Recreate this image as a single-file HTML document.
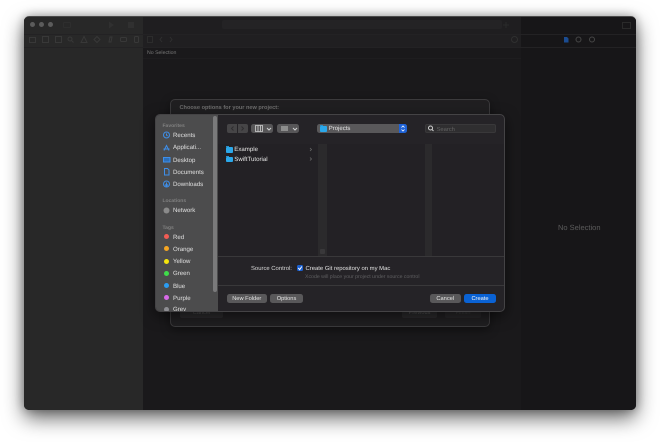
<!DOCTYPE html>
<html><head><meta charset="utf-8">
<style>
html,body{margin:0;padding:0;background:#fff;width:660px;height:442px;overflow:hidden}
*{box-sizing:border-box}
body{font-family:"Liberation Sans",sans-serif;position:relative;text-rendering:geometricPrecision}
#w{position:absolute;left:0;top:0;width:660px;height:442px;filter:blur(.35px)}
.a{position:absolute}
.t{position:absolute;white-space:nowrap;line-height:10px;font-size:6.1px;color:#e2e2e2;margin-top:1px}
.side{left:173px;color:#e0e0e0}
.hd{left:162.500px;color:#808080;font-size:5px;font-weight:bold}
.dot{position:absolute;left:164.300px;width:5px;height:5px;border-radius:50%}
.btn{position:absolute;height:9px;border-radius:2.500px;background:#59585a;color:#e4e4e4;font-size:5.700px;line-height:10px;text-align:center}
.folder{position:absolute;left:226px;width:6.500px;height:5.500px;background:#2ba8ea;border-radius:1px}
.folder:before{content:"";position:absolute;left:0;top:-1px;width:3px;height:1px;background:#2a8fc8}
.ic{position:absolute;border:1px solid #2e2e2e}
svg{position:absolute;left:0;top:0}
</style></head>
<body>
<div id="w">
<!-- window -->
<div class="a" style="left:24px;top:16px;width:612px;height:394px;border-radius:5px;background:#1a191b;box-shadow:0 8px 20px rgba(0,0,0,.6),0 0 10px rgba(0,0,0,.3);overflow:hidden;border-top:1px solid #4a4a4a">
  <div class="a" style="left:0;top:0;width:119px;height:394px;background:#282828"></div>
  <div class="a" style="left:119px;top:0;width:378px;height:18px;background:#1f1e20"></div>
  <div class="a" style="left:119px;top:18px;width:378px;height:13px;background:#201f21"></div>
  <div class="a" style="left:497px;top:0;width:115px;height:394px;background:#171618;"></div>
  <div class="a" style="left:0;top:17px;width:612px;height:1px;background:#232224"></div>
  <div class="a" style="left:0;top:30px;width:612px;height:1px;background:#232224"></div>
  <div class="a" style="left:119px;top:41px;width:378px;height:1px;background:#1e1d1f"></div>
</div>
<div class="a" style="left:30px;top:22px;width:5px;height:5px;border-radius:50%;background:#5c5c5c"></div>
<div class="a" style="left:39px;top:22px;width:5px;height:5px;border-radius:50%;background:#5c5c5c"></div>
<div class="a" style="left:48px;top:22px;width:5px;height:5px;border-radius:50%;background:#5c5c5c"></div>
<div class="ic" style="left:63px;top:22px;width:8px;height:6px;border-radius:1px"></div>
<svg width="660" height="442" fill="none">
  <path d="M109 21.500l5 3.500-5 3.500z" fill="#303030"/>
  <rect x="128" y="22" width="6" height="6" fill="#303030"/>
  <g stroke="#383838" stroke-width="1">
    <rect x="29.500" y="37.500" width="6" height="5"/>
    <rect x="42.500" y="36.500" width="6" height="6"/>
    <rect x="55.500" y="36.500" width="6" height="6"/>
    <circle cx="70" cy="39" r="2"/><path d="M71.500 40.500l2 2"/>
    <path d="M84 36.500l3 6h-6z"/>
    <path d="M97 36.500l3 3-3 3-3-3z"/>
    <path d="M109 42l1-5 2 0-1 5z"/>
    <rect x="120.500" y="37.500" width="6" height="4" rx="1"/>
    <rect x="134.500" y="36.500" width="4" height="6" rx="1"/>
    <rect x="147.500" y="36.500" width="5" height="6" stroke="#2c2c2c"/>
    <path d="M162 37l-2 2.500 2 2.500M170 37l2 2.500-2 2.500" stroke="#2f2f2f"/>
    <circle cx="514.500" cy="39.500" r="3" stroke="#303030"/>
    <path d="M503 25h6M506 22v6" stroke="#2a2a2a"/>
    <rect x="622.500" y="22.500" width="8" height="6" stroke="#2a2a2a"/>
    <circle cx="578.500" cy="39.500" r="2.500" stroke="#464646"/>
    <circle cx="592" cy="39.500" r="2.500" stroke="#464646"/>
  </g>
  <path d="M564 37h3l1.500 1.500V42.500H564z" fill="#1b4c91"/>
</svg>
<div class="a" style="left:222px;top:20px;width:280px;height:9px;background:#242325;border-radius:2px"></div>
<div class="t" style="left:147px;top:46.500px;font-size:5.200px;color:#777">No Selection</div>
<div class="t" style="left:558px;top:222px;font-size:7.500px;color:#5c5c5c">No Selection</div>

<!-- back sheet -->
<div class="a" style="left:170px;top:99px;width:320px;height:228px;background:#201f21;border:1px solid #3b3a3c;border-radius:5px;box-shadow:0 3px 10px rgba(0,0,0,.4)"></div>
<div class="t" style="left:179.500px;top:102px;font-size:5.600px;font-weight:bold;color:#6f6f6f">Choose options for your new project:</div>
<div class="a" style="left:180px;top:309px;width:43px;height:9px;background:#2b2a2c;border-radius:2px;color:#555;font-size:5.600px;line-height:9px;text-align:center">Cancel</div>
<div class="a" style="left:402px;top:309px;width:35px;height:9px;background:#2b2a2c;border-radius:2px;color:#5a5a5a;font-size:5.600px;line-height:9px;text-align:center">Previous</div>
<div class="a" style="left:445px;top:309px;width:36px;height:9px;background:#272628;border-radius:2px;color:#3f3f3f;font-size:5.600px;line-height:9px;text-align:center">Finish</div>

<!-- front sheet -->
<div class="a" style="left:155px;top:114px;width:350px;height:198px;background:#252327;border:1px solid #444345;border-radius:5px;box-shadow:0 4px 14px rgba(0,0,0,.55);overflow:hidden">
  <div class="a" style="left:-1px;top:-1px;width:63px;height:198px;background:#4c4c4d"></div>
  <div class="a" style="left:57px;top:1px;width:4px;height:176px;background:#7a7a7b;border-radius:2px"></div>
  <div class="a" style="left:62px;top:0;width:288px;height:31px;border-bottom:1px solid #2f2e30"></div>
  <div class="a" style="left:62px;top:29px;width:288px;height:112px;background:#232125"></div>
  <div class="a" style="left:162px;top:29px;width:9px;height:112px;background:#2b2a2c"></div>
  <div class="a" style="left:269px;top:29px;width:7px;height:112px;background:#2b2a2c"></div>
  <div class="a" style="left:163.500px;top:134px;width:5px;height:5px;background:#39383a;border-radius:1px"></div>
  <div class="a" style="left:62px;top:141px;width:288px;height:1px;background:#39383a"></div>
  <div class="a" style="left:62px;top:170px;width:288px;height:1px;background:#39383a"></div>
</div>

<!-- toolbar -->
<div class="a" style="left:227px;top:124px;width:10px;height:9px;background:#464547;border-radius:2px 0 0 2px"></div>
<div class="a" style="left:238px;top:124px;width:10px;height:9px;background:#464547;border-radius:0 2px 2px 0"></div>
<div class="a" style="left:251px;top:124px;width:22px;height:9px;background:#575658;border-radius:2.500px"></div>
<div class="a" style="left:277px;top:124px;width:22px;height:9px;background:#575658;border-radius:2.500px"></div>
<div class="a" style="left:281px;top:126px;width:7px;height:5px;background:#8d8d8d"></div>
<div class="a" style="left:317px;top:124px;width:90px;height:9px;background:#59585a;border-radius:2.500px"></div>
<div class="a" style="left:399px;top:124px;width:8px;height:9px;background:#1e62d6;border-radius:0 2.500px 2.500px 0"></div>
<div class="folder" style="left:320px;top:126px"></div>
<div class="t" style="left:328.700px;top:123px;font-size:6px;color:#e4e4e4">Projects</div>
<div class="a" style="left:425px;top:124px;width:71px;height:9px;background:#2f2e30;border:1px solid #39383a;border-radius:2px"></div>
<div class="t" style="left:436.500px;top:123.500px;font-size:5.800px;color:#626262">Search</div>
<svg width="660" height="442" fill="none">
  <path d="M233.500 126.500l-2 2 2 2M241.500 126.500l2 2-2 2" stroke="#2f2e30"/>
  <path d="M255.500 125.500h7v6h-7zM258 125.500v6M260.500 125.500v6" stroke="#d0d0d0" stroke-width=".8"/>
  <path d="M267 128l2 2 2-2M293 128l2 2 2-2" stroke="#d0d0d0"/>
  <path d="M401.500 127.500l1.500-1.500 1.500 1.500M401.500 129.500l1.500 1.500 1.500-1.500" stroke="#fff" stroke-width=".8"/>
  <circle cx="430.500" cy="128" r="2" stroke="#d0d0d0"/><path d="M432 129.500l1.500 1.500" stroke="#d0d0d0"/>
  <path d="M310 148l1.500 1.500L310 151M310 157.500l1.500 1.500-1.500 1.500" stroke="#666" stroke-width=".8"/>

  <!-- sidebar icons -->
  <g stroke="#3e8fea" stroke-width="1">
    <circle cx="166.500" cy="135" r="3"/><path d="M166.500 133.500V135l1 1"/>
    <path d="M164 150.500l2.500-5 2.500 5M163.500 149h6"/>
    <rect x="163.500" y="157.500" width="6.500" height="4.500" fill="#2d6fb8"/>
    <path d="M164.500 168.500h3l1.500 1.500v5h-4.500z"/>
    <circle cx="166.500" cy="184" r="3"/><path d="M166.500 182.500v3M165 184.500l1.500 1.500 1.500-1.500"/>
  </g>
  <circle cx="166.500" cy="210.500" r="3" fill="#8a8a8a"/>
</svg>

<div class="t hd" style="top:120px">Favorites</div>
<div class="t side" style="top:130px">Recents</div>
<div class="t side" style="top:142px">Applicati...</div>
<div class="t side" style="top:154.500px">Desktop</div>
<div class="t side" style="top:167px">Documents</div>
<div class="t side" style="top:179px">Downloads</div>
<div class="t hd" style="top:194.500px">Locations</div>
<div class="t side" style="top:205px">Network</div>
<div class="t hd" style="top:221.500px">Tags</div>
<div class="dot" style="top:234px;background:#f25c54"></div><div class="t side" style="top:231.500px">Red</div>
<div class="dot" style="top:246px;background:#f5a623"></div><div class="t side" style="top:243.500px">Orange</div>
<div class="dot" style="top:258.500px;background:#f5e50c"></div><div class="t side" style="top:256px">Yellow</div>
<div class="dot" style="top:270.500px;background:#3fdc4a"></div><div class="t side" style="top:268px">Green</div>
<div class="dot" style="top:283px;background:#2a9cf2"></div><div class="t side" style="top:280.500px">Blue</div>
<div class="dot" style="top:295px;background:#d86ae8"></div><div class="t side" style="top:292.500px">Purple</div>
<div class="a" style="left:156px;top:305px;width:61px;height:6px;overflow:hidden">
  <div class="dot" style="left:8.300px;top:2px;background:#8e8e93"></div>
  <div class="t side" style="left:17px;top:-1.500px">Grey</div>
</div>

<!-- file list -->
<div class="folder" style="top:147px"></div>
<div class="t" style="left:234.300px;top:144px;font-size:6.100px;color:#e4e4e4">Example</div>
<div class="folder" style="top:156.500px"></div>
<div class="t" style="left:234.300px;top:153.500px;font-size:6.100px;color:#e4e4e4">SwiftTutorial</div>

<!-- source control -->
<div class="t" style="left:251px;top:262.500px;font-size:5.900px;color:#d8d8d8">Source Control:</div>
<div class="a" style="left:296.500px;top:264.500px;width:6.500px;height:6.500px;background:#1a5fd0;border-radius:1.500px"></div>
<svg width="660" height="442" fill="none"><path d="M298.300 268l1.400 1.700 2.100-3.200" stroke="#fff" stroke-width="1"/></svg>
<div class="t" style="left:305.500px;top:262.500px;font-size:5.900px;color:#e2e2e2">Create Git repository on my Mac</div>
<div class="t" style="left:305px;top:270.500px;font-size:5.200px;color:#5f5f61">Xcode will place your project under source control</div>

<!-- buttons -->
<div class="btn" style="left:227px;top:294px;width:39.500px">New Folder</div>
<div class="btn" style="left:270px;top:294px;width:33px">Options</div>
<div class="btn" style="left:429.500px;top:294px;width:31.500px">Cancel</div>
<div class="btn" style="left:464px;top:294px;width:32px;background:#0a62d4;color:#f4f4f4">Create</div>
</div>
</body></html>
